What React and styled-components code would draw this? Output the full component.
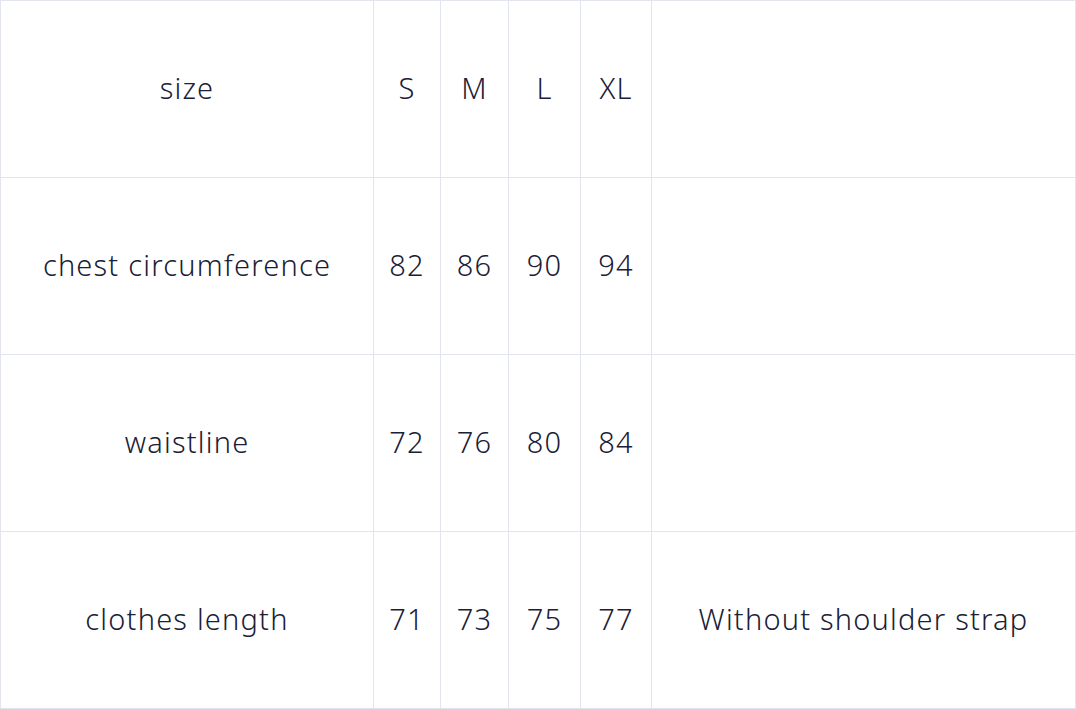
import { Fragment } from 'react';
import styled, { createGlobalStyle } from 'styled-components';

const GlobalStyle = createGlobalStyle`
	html, body {
		margin: 0;
		padding: 0;
		background: #ffffff;
	}
`;

const StyledSizeTable = styled.div`
	display: grid;
	grid-template-columns: 373px 67px 68px 72px 71px 1fr;
	grid-auto-rows: 177px;
	width: 1076px;
	box-sizing: border-box;
	border-top: 1px solid #e2e4ee;
	border-left: 1px solid #e2e4ee;
	font-family: 'Noto Sans', 'Open Sans', sans-serif;
	font-weight: 300;
	font-size: 29px;
	color: #1a2036;
`;

const StyledCell = styled.div`
	display: flex;
	align-items: center;
	justify-content: center;
	padding: 0 0 4px;
	border-right: 1px solid #e2e4ee;
	border-bottom: 1px solid #e2e4ee;
	white-space: nowrap;
	letter-spacing: 1.2px;
`;

const sizes = ['S', 'M', 'L', 'XL'];

const rows = [
	{ name: 'chest circumference', values: [82, 86, 90, 94], note: '' },
	{ name: 'waistline', values: [72, 76, 80, 84], note: '' },
	{ name: 'clothes length', values: [71, 73, 75, 77], note: 'Without shoulder strap' },
];

const App = () => {
	return (
		<>
			<GlobalStyle />
			<StyledSizeTable>
				<StyledCell>size</StyledCell>
				{sizes.map(size => (
					<StyledCell key={size}>{size}</StyledCell>
				))}
				<StyledCell />
				{rows.map(row => (
					<Fragment key={row.name}>
						<StyledCell>{row.name}</StyledCell>
						{row.values.map((value, i) => (
							<StyledCell key={i}>{value}</StyledCell>
						))}
						<StyledCell>{row.note}</StyledCell>
					</Fragment>
				))}
			</StyledSizeTable>
		</>
	);
};

export default App;
